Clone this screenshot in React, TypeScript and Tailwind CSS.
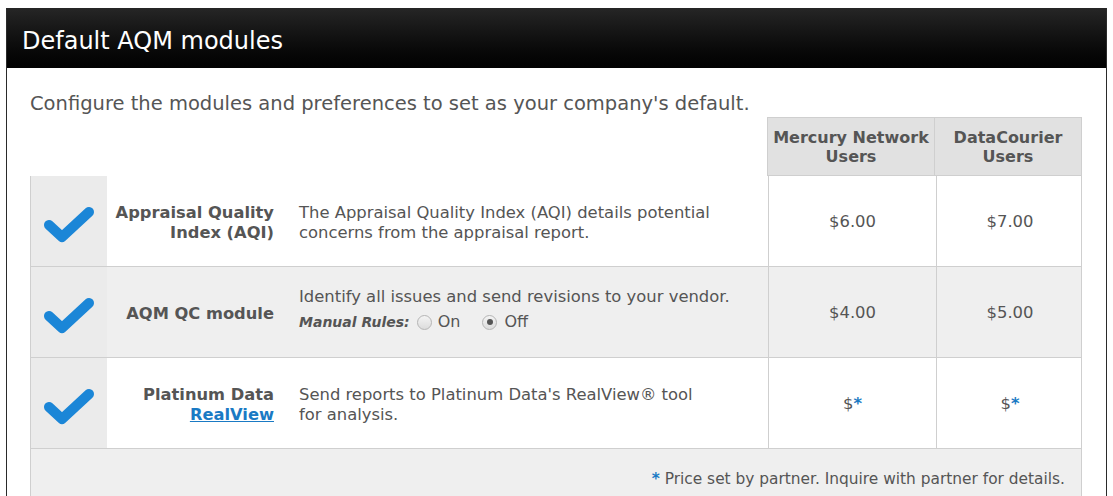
import React from "react";

const font = { fontFamily: '"DejaVu Sans", Verdana, sans-serif' };

function Check() {
  return (
    <svg width="52" height="38" viewBox="0 0 52 38">
      <polyline
        points="6,20 19,32 46,7"
        fill="none"
        stroke="#1b86d7"
        strokeWidth="10"
        strokeLinecap="round"
        strokeLinejoin="round"
      />
    </svg>
  );
}

function Radio({ checked }: { checked?: boolean }) {
  return (
    <span className="inline-flex items-center justify-center w-[15px] h-[15px] rounded-full border border-[#b5b5b5] bg-gradient-to-b from-[#f4f4f4] to-[#dcdcdc]">
      {checked && <span className="w-[6px] h-[6px] rounded-full bg-[#555]" />}
    </span>
  );
}

const rows = [
  {
    name: <>Appraisal Quality<br />Index (AQI)</>,
    desc: <>The Appraisal Quality Index (AQI) details potential<br />concerns from the appraisal report.</>,
    p1: "$6.00",
    p2: "$7.00",
    bg: "bg-white",
    pt: "pt-[3px]",
  },
  {
    name: <>AQM QC module</>,
    desc: (
      <>
        <div>Identify all issues and send revisions to your vendor.</div>
        <div className="flex items-center mt-[5px] mb-[8px] text-[16px]">
          <span className="font-bold italic text-[14px] mr-[7px]">Manual Rules:</span>
          <Radio />
          <span className="ml-[6px] mr-[22px]">On</span>
          <Radio checked />
          <span className="ml-[7px]">Off</span>
        </div>
      </>
    ),
    p1: "$4.00",
    p2: "$5.00",
    bg: "bg-[#efefef]",
    pt: "pt-[3px]",
  },
  {
    name: (
      <>
        Platinum Data<br />
        <a href="#" className="text-[#1a7ac4] underline">RealView</a>
      </>
    ),
    desc: <>Send reports to Platinum Data's RealView® tool<br />for analysis.</>,
    p1: "star",
    p2: "star",
    bg: "bg-white",
    pt: "pt-[3px]",
  },
];

function Price({ v }: { v: string }) {
  if (v === "star")
    return (
      <span>
        $<span className="text-[#1a7ac4] font-bold">*</span>
      </span>
    );
  return <span>{v}</span>;
}

export default function App() {
  return (
    <div className="bg-white min-h-screen pt-[8px] pl-[6px] text-[#555]" style={font}>
      <div className="w-[1101px] border-x border-[#2a2a2a] min-h-[488px]">
        <div className="h-[60px] bg-gradient-to-b from-[#262626] to-[#020202] flex items-center px-[15px] pt-[5px] text-white text-[24px]">
          Default AQM modules
        </div>
        <div className="pl-[23px] pt-[24px]">
          <div className="text-[19.5px] leading-[24px] mb-[1px]">
            Configure the modules and preferences to set as your company's default.
          </div>
          <div className="w-[1052px]">
            <div className="grid grid-cols-[76px_179px_482px_168px_147px]">
              <div className="col-span-3" />
              <div className="h-[59px] bg-[#e1e1e1] border border-[#cfcfcf] flex items-center justify-center text-center font-bold text-[16px] leading-[19px]">
                Mercury Network<br />Users
              </div>
              <div className="h-[59px] bg-[#e1e1e1] border border-l-0 border-[#cfcfcf] flex items-center justify-center text-center font-bold text-[16px] leading-[19px]">
                DataCourier<br />Users
              </div>
            </div>
            {rows.map((r, i) => (
              <div
                key={i}
                className={`grid grid-cols-[76px_179px_482px_168px_147px] h-[91px] border-x border-b border-[#cfcfcf] ${r.bg}`}
              >
                <div className="bg-[#ebebeb] flex items-center justify-center pt-[6px]">
                  <Check />
                </div>
                <div className={`flex items-center justify-end pr-[12px] text-right font-bold text-[16.3px] leading-[20px] ${r.pt}`}>
                  <div>{r.name}</div>
                </div>
                <div className={`flex items-center pl-[13px] text-[16.4px] leading-[20px] ${r.pt}`}>
                  <div>{r.desc}</div>
                </div>
                <div className="border-l border-[#cfcfcf] flex items-center justify-center text-[16.4px] pt-[3px]">
                  <Price v={r.p1} />
                </div>
                <div className="border-l border-[#cfcfcf] flex items-center justify-center text-[16.4px] pt-[3px]">
                  <Price v={r.p2} />
                </div>
              </div>
            ))}
            <div className="h-[60px] bg-[#efefef] border-x border-[#cfcfcf] flex justify-end pr-[16px] pt-[19px] text-[15.4px]">
              <span>
                <span className="text-[#1a7ac4] font-bold">*</span> Price set by partner. Inquire with partner for details.
              </span>
            </div>
          </div>
        </div>
      </div>
    </div>
  );
}
